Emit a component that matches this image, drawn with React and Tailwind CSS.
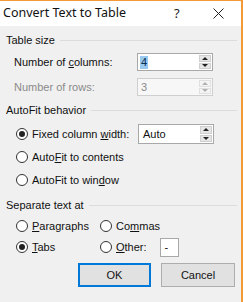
const titleFont = { fontFamily: '"Noto Sans", "Open Sans", sans-serif' };
const font = { fontFamily: '"Liberation Sans", Arial, sans-serif' };

const Radio = ({ checked }) => (
  <span className="w-[12px] h-[12px] rounded-full border border-[#333] bg-white flex items-center justify-center shrink-0">
    {checked && <span className="w-[6px] h-[6px] rounded-full bg-[#222]" />}
  </span>
);

const Spin = ({ disabled }) => (
  <div className="flex flex-col w-[13px] h-full gap-[1px] py-[1px] pr-[1px]">
    {["up", "down"].map((d) => (
      <div
        key={d}
        className={`flex-1 flex items-center justify-center border ${
          disabled ? "bg-[#f4f4f4] border-[#e0e0e0]" : "bg-[#e6e6e6] border-[#cfcfcf]"
        }`}
      >
        <span
          className={`w-0 h-0 border-l-[3px] border-r-[3px] border-l-transparent border-r-transparent ${
            d === "up" ? "border-b-[3px]" : "border-t-[3px]"
          } ${disabled ? "border-b-[#b0b0b0] border-t-[#b0b0b0]" : "border-b-[#222] border-t-[#222]"}`}
        />
      </div>
    ))}
  </div>
);

const Header = ({ title }) => (
  <div className="flex items-center h-[14px] gap-[5px] pr-[4px]">
    <span className="text-[11px] text-[#111] leading-none">{title}</span>
    <span className="flex-1 h-px bg-[#dcdcdc]" />
  </div>
);

const RadioRow = ({ checked, children }) => (
  <div className="flex items-center gap-[4px] text-[11px] text-[#111]">
    <Radio checked={checked} />
    <span className="leading-none">{children}</span>
  </div>
);

export default function App() {
  return (
    <div
      className="w-[243px] h-[302px] bg-[#f0f0f0] border-t border-r-2 border-[#f39a36] flex flex-col overflow-hidden"
      style={font}
    >
      {/* Title bar */}
      <div className="h-[25px] bg-white flex items-center pl-[3px] shrink-0" style={titleFont}>
        <span className="text-[12.5px] text-[#111] flex-1">Convert Text to Table</span>
        <span className="text-[13px] text-[#222] w-[10px] mr-[29px]">?</span>
        <svg width="11" height="11" viewBox="0 0 11 11" className="mr-[17px]">
          <path d="M0.5 0.5 L10.5 10.5 M10.5 0.5 L0.5 10.5" stroke="#222" strokeWidth="1" />
        </svg>
      </div>

      <div className="pl-[6px] pt-[7px] flex flex-col">
        <Header title="Table size" />
        <div className="pl-[8px] pr-[28px] mt-[6px] flex flex-col gap-[7px]">
          <div className="flex items-center justify-between h-[18px]">
            <span className="text-[11px] text-[#111]">
              Number of <u>c</u>olumns:
            </span>
            <div className="w-[76px] h-[18px] border border-[#a8a8a8] bg-white flex">
              <div className="flex-1 flex items-center pl-[2px]">
                <span className="bg-[#99c9ef] text-[11px] text-[#0b2d4f] leading-[13px] px-[1px]">4</span>
              </div>
              <Spin />
            </div>
          </div>
          <div className="flex items-center justify-between h-[18px]">
            <span className="text-[11px] text-[#8a8a8a]">Number of rows:</span>
            <div className="w-[76px] h-[18px] border border-[#cfcfcf] bg-[#f7f7f7] flex">
              <div className="flex-1 flex items-center pl-[3px] text-[11px] text-[#8a8a8a]">3</div>
              <Spin disabled />
            </div>
          </div>
        </div>

        <div className="mt-[7px]">
          <Header title="AutoFit behavior" />
        </div>
        <div className="pl-[10px] pr-[27px] mt-[7px] flex flex-col">
          <div className="flex items-center justify-between h-[20px]">
            <RadioRow checked>
              Fixed column <u>w</u>idth:
            </RadioRow>
            <div className="w-[76px] h-[20px] border border-[#a8a8a8] bg-white flex">
              <div className="flex-1 flex items-center pl-[4px] text-[11px] text-[#111]">Auto</div>
              <Spin />
            </div>
          </div>
          <div className="h-[22px] flex items-center mt-[2px]">
            <RadioRow>
              Auto<u>F</u>it to contents
            </RadioRow>
          </div>
          <div className="h-[22px] flex items-center mt-[1px]">
            <RadioRow>
              AutoFit to win<u>d</u>ow
            </RadioRow>
          </div>
        </div>

        <div className="mt-[7px]">
          <Header title="Separate text at" />
        </div>
        <div className="pl-[10px] mt-[4px] grid grid-cols-[84px_1fr]">
          <div className="h-[20px] flex items-center">
            <RadioRow>
              <u>P</u>aragraphs
            </RadioRow>
          </div>
          <div className="h-[20px] flex items-center">
            <RadioRow>
              Co<u>m</u>mas
            </RadioRow>
          </div>
          <div className="h-[22px] flex items-center">
            <RadioRow checked>
              <u>T</u>abs
            </RadioRow>
          </div>
          <div className="h-[22px] flex items-center">
            <RadioRow>
              <u>O</u>ther:
            </RadioRow>
            <div className="ml-[13px] w-[19px] h-[19px] border border-[#a8a8a8] bg-white flex items-center pl-[4px] text-[11px] text-[#111]">
              -
            </div>
          </div>
        </div>

        <div className="flex justify-end gap-[10px] pr-[6px] mt-[5px]">
          <button className="w-[73px] h-[24px] bg-[#e1e1e1] border-2 border-[#0078d7] text-[11px] text-[#111]">
            OK
          </button>
          <button className="w-[74px] h-[24px] bg-[#e1e1e1] border border-[#adadad] text-[11px] text-[#111]">
            Cancel
          </button>
        </div>
      </div>
    </div>
  );
}
